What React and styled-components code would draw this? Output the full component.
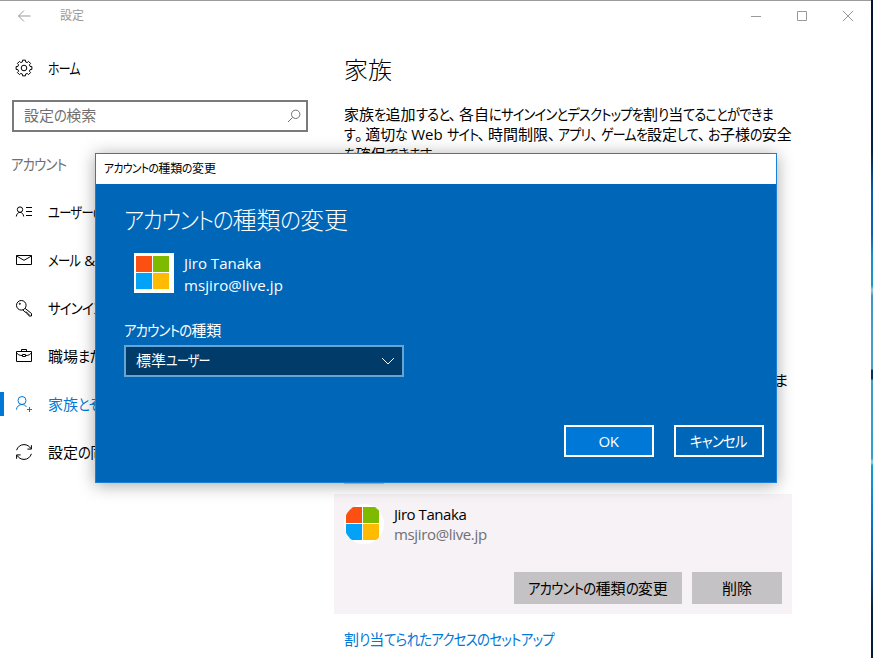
import React from 'react';
import styled, { createGlobalStyle } from 'styled-components';

const GlobalStyle = createGlobalStyle`
	* {
		box-sizing: border-box;
	}

	body {
		margin: 0;
		overflow: hidden;
		background: #fff;
		font-family: "Open Sans", "Noto Sans CJK JP", sans-serif;
		font-size: 15px;
		line-height: 20px;
		color: #000;
		font-feature-settings: "palt";
	}
`;

const Desktop = styled.div`
	position: relative;
	width: 873px;
	height: 658px;
	padding-right: 2px;
	overflow: hidden;
	background: linear-gradient(
		to bottom,
		#04142e 0, #06204a 150px, #0a5cab 190px, #0b61b5 235px, #1690c9 255px,
		#1b95c8 285px, #9fc3cc 290px, #3d96c6 296px, #4ba0ca 369px,
		#06305c 370px, #06305c 379px, #3f9ac8 380px, #2ea0d0 458px,
		#9fd0da 462px, #0d9fd2 466px, #0878cc 520px, #0a4f96 570px, #06213f 610px, #041a33 658px
	);
`;

const Window = styled.div`
	display: flex;
	flex-direction: column;
	height: 100%;
	border-top: 1px solid #9b9b9b;
	background: #fff;
`;

const TitleBar = styled.div`
	display: flex;
	align-items: center;
	flex: none;
	height: 30px;
	padding-left: 16px;
	font-size: 12px;
	color: #999;
`;

const TitleText = styled.span`
	flex: 1;
	margin-left: 28px;
`;

const WindowButton = styled.span`
	display: flex;
	align-items: center;
	justify-content: center;
	width: 46px;
	height: 30px;
`;

const Body = styled.div`
	display: flex;
	flex: 1;
	min-height: 0;
`;

const Sidebar = styled.div`
	display: flex;
	flex-direction: column;
	width: 320px;
`;

const NavItem = styled.div`
	display: flex;
	align-items: center;
	flex: none;
	height: 48px;
	white-space: nowrap;
	color: ${props => (props.$active ? '#0078d7' : '#000')};

	&::before {
		content: '';
		width: 4px;
		height: 24px;
		background: ${props => (props.$active ? '#0078d7' : 'transparent')};
	}

	svg {
		margin: 0 12px 0 8px;
	}
`;

const HomeItem = styled(NavItem)`
	margin-top: 13px;
`;

const SearchBox = styled.div`
	display: flex;
	align-items: center;
	justify-content: space-between;
	flex: none;
	width: 296px;
	height: 32px;
	margin: 8px 0 0 12px;
	padding: 0 5px 2px 10px;
	border: 2px solid #7a7a7a;
	color: #707070;
`;

const NavTitle = styled.div`
	flex: none;
	height: 56px;
	padding: 22px 0 0 11px;
	color: #707070;
`;

const Main = styled.div`
	display: flex;
	flex-direction: column;
	width: 472px;
	padding: 22px 0 0 14px;
`;

const PageTitle = styled.h1`
	margin: 0 0 0 10px;
	font-size: 24px;
	line-height: 34px;
	font-weight: 300;
`;

const Paragraph = styled.p`
	margin: 17px 0 0 10px;
	white-space: nowrap;
`;

const HiddenNote = styled.div`
	margin-top: 206px;
	padding-right: 4px;
	text-align: right;
`;

const AddTile = styled.div`
	width: 40px;
	height: 40px;
	margin: 54px 0 0 10px;
	background: #ccc;
`;

const UserCard = styled.div`
	display: flex;
	flex-direction: column;
	flex: none;
	justify-content: space-between;
	height: 120px;
	margin-top: 10px;
	padding: 10px;
	background: #f6f2f6;
`;

const UserRow = styled.div`
	display: flex;
	gap: 10px;
`;

const Avatar = styled.div`
	display: grid;
	grid-template-columns: 15.5px 15.5px;
	grid-template-rows: 15.5px 15.5px;
	gap: 1.5px;
	width: 40px;
	height: 40px;
	padding: 3px 0 0 2px;
	border-radius: ${props => (props.$round ? '50%' : '0')};
	overflow: hidden;
	background: #fff;
`;

const Tile = styled.span`
	background: ${props => props.$color};
`;

const Latin = styled.div`
	letter-spacing: ${props => props.$spacing}px;
	color: ${props => props.$color || 'inherit'};
`;

const CardButtons = styled.div`
	display: flex;
	justify-content: flex-end;
	gap: 10px;
`;

const GrayButton = styled.div`
	display: flex;
	align-items: center;
	justify-content: center;
	width: ${props => props.$width}px;
	height: 32px;
	background: #c4c2c4;
	white-space: nowrap;
`;

const Link = styled.div`
	margin: 15px 0 0 10px;
	color: #0078d7;
	white-space: nowrap;
`;

const Dialog = styled.div`
	position: absolute;
	left: 95px;
	top: 153px;
	width: 682px;
	height: 330px;
	display: flex;
	flex-direction: column;
	border: 1px solid #1a80d9;
	background: #0067b8;
	color: #fff;
	box-shadow: 0 2px 16px rgba(0, 0, 0, 0.35);
`;

const DialogBar = styled.div`
	height: 30px;
	padding-left: 8px;
	line-height: 30px;
	font-size: 12px;
	background: #fff;
	color: #000;
`;

const DialogBody = styled.div`
	display: flex;
	flex-direction: column;
	flex: 1;
	padding: 19px 12px 25px 28px;
`;

const DialogTitle = styled.h2`
	margin: 0;
	font-size: 24px;
	line-height: 34px;
	font-weight: 300;
`;

const DialogUser = styled(UserRow)`
	height: 40px;
	margin: 16px 0 0 10px;
	line-height: 22px;
`;

const UserLines = styled.div`
	margin-top: -1px;
`;

const Label = styled.div`
	margin-top: 27px;
`;

const Select = styled.div`
	display: flex;
	align-items: center;
	justify-content: space-between;
	width: 280px;
	height: 32px;
	margin-top: 5px;
	padding: 0 7px 2px 10px;
	border: 2px solid #66a4d4;
	background: #003b69;
`;

const DialogButtons = styled.div`
	display: flex;
	justify-content: flex-end;
	gap: 20px;
	margin-top: auto;
`;

const DialogButton = styled.div`
	display: flex;
	align-items: center;
	justify-content: center;
	width: 90px;
	height: 32px;
	padding-right: 1px;
	border: 2px solid #fff;
	background: ${props => (props.$primary ? '#0078d7' : 'transparent')};
	letter-spacing: ${props => (props.$primary ? '-0.4px' : 'normal')};
`;

// narrow kana: the glyphs are squeezed and the freed width is given back
const Kana = styled.span`
	display: inline-block;
	letter-spacing: -0.06em;
	transform: scaleX(${props => props.$scale});
	transform-origin: 0 50%;
	margin-right: ${props => -props.$count * 0.84 * (1 - props.$scale)}em;
`;

const Mark = styled.span`
	margin-right: 0.18em;
`;

const Jp = ({ children, scale = 0.893 }) => (
  <span>
    {children.split(/([\u3040-\u30ff]+|[、。])/).map((part, i) => {
      if (i % 2 === 0) return part;
      if (part === '、' || part === '。') return <Mark key={i}>{part}</Mark>;
      return <Kana key={i} $scale={scale} $count={part.length}>{part}</Kana>;
    })}
  </span>
);

const Icon = ({ size = 24, children }) => (
  <svg width={size} height={size} viewBox={`0 0 ${size} ${size}`} fill="none" stroke="currentColor" strokeWidth="1">
    {children}
  </svg>
);

const gearPath = () => {
  const points = [];
  for (let i = 0; i < 8; i++) {
    const base = (i * Math.PI) / 4;
    [[-0.25, 6.3], [-0.18, 8], [0.18, 8], [0.25, 6.3]].forEach(([a, r]) => {
      points.push(`${(12 + r * Math.sin(base + a)).toFixed(2)} ${(12 - r * Math.cos(base + a)).toFixed(2)}`);
    });
  }
  return `M${points.join('L')}Z`;
};

const icons = {
  home: <><path d={gearPath()} /><circle cx="12" cy="12" r="2.8" /></>,
  user: <><circle cx="8" cy="9.6" r="2.7" /><path d="M4.3 16.5c.3-2.6 1.8-4.1 3.7-4.1s3.4 1.5 3.7 4.1M14 7.5h6M14 11.5h6M14 15.5h6" /></>,
  mail: <><path d="M4.500 7.500h15v9h-15z" /><path d="M4.500 8l7.500 4.300L19.500 8" /></>,
  key: <><circle cx="9.300" cy="9.300" r="4.800" /><circle cx="7.800" cy="7.800" r=".6" /><path d="M13 12.300l6.500 5.200v2.500h-2.600v-1.900h-1.900v-1.900h-2l-2-2.300" /></>,
  work: <><path d="M4.500 7.500h15v10h-15zM9.500 7.500v-2h5v2M4.500 8.500c1 2 3 3 5.500 3M19.500 8.500c-1 2-3 3-5.500 3" /><path d="M10.500 10.500h3v2h-3z" /></>,
  family: <><circle cx="10" cy="8.500" r="4" /><path d="M4.400 17.700c.4-3 2.500-5.200 5.600-5.200 2 0 3.500.9 4.400 2.300M17.500 15v5M15 17.500h5" /></>,
  sync: <><path d="M4.600 10.200C5.600 6.800 8.500 4.600 12 4.600c3 0 5.500 1.600 6.900 4M19.400 5.200v3.900h-4M19.400 13.800c-1 3.400-3.900 5.600-7.400 5.600-3 0-5.500-1.600-6.900-4M4.600 18.800v-3.900h4" /></>,
};

const navItems = [
  { icon: 'user', label: 'ユーザーの', scale: 0.82 },
  { icon: 'mail', label: 'メール &', scale: 0.82 },
  { icon: 'key', label: 'サインイン' },
  { icon: 'work', label: '職場また' },
  { icon: 'family', label: '家族とそ', active: true },
  { icon: 'sync', label: '設定の同' },
];

const tileColors = ['#fb5012', '#7dba00', '#02a3f6', '#ffba02'];

const Logo = ({ round }) => (
  <Avatar $round={round}>
    {tileColors.map(color => <Tile key={color} $color={color} />)}
  </Avatar>
);

const App = () => {
  return (
    <>
      <GlobalStyle />
      <Desktop>
        <Window>
          <TitleBar>
            <Icon size={16}><path d="M14.500 8H2.500M8 2.500L2.500 8 8 13.500" /></Icon>
            <TitleText>設定</TitleText>
            <WindowButton><Icon size={16}><path d="M3 8.500h10" /></Icon></WindowButton>
            <WindowButton><Icon size={16}><path d="M3.500 3.500h9v9h-9z" /></Icon></WindowButton>
            <WindowButton><Icon size={16}><path d="M3 3l10 10M13 3L3 13" /></Icon></WindowButton>
          </TitleBar>
          <Body>
            <Sidebar>
              <HomeItem>
                <Icon>{icons.home}</Icon>
                <Jp scale={0.79}>ホーム</Jp>
              </HomeItem>
              <SearchBox>
                <Jp>設定の検索</Jp>
                <Icon size={14}><circle cx="8.700" cy="6.300" r="4.200" /><path d="M5.600 9.400L1 14" /></Icon>
              </SearchBox>
              <NavTitle><Jp>アカウント</Jp></NavTitle>
              {navItems.map(item => (
                <NavItem key={item.icon} $active={item.active}>
                  <Icon>{icons[item.icon]}</Icon>
                  <Jp scale={item.scale}>{item.label}</Jp>
                </NavItem>
              ))}
            </Sidebar>
            <Main>
              <PageTitle>家族</PageTitle>
              <Paragraph>
                <Jp scale={0.885}>家族を追加すると、各自にサインインとデスクトップを割り当てることができま</Jp><br />
                <Jp scale={0.865}>す。適切な Web サイト、時間制限、アプリ、ゲームを設定して、お子様の安全</Jp><br />
                <Jp>を確保できます。</Jp>
              </Paragraph>
              <HiddenNote>ま</HiddenNote>
              <AddTile />
              <UserCard>
                <UserRow>
                  <Logo round />
                  <div>
                    <Latin $spacing={-0.45}>Jiro Tanaka</Latin>
                    <Latin $spacing={-0.35} $color="#707070">msjiro@live.jp</Latin>
                  </div>
                </UserRow>
                <CardButtons>
                  <GrayButton $width={168}><Jp>アカウントの種類の変更</Jp></GrayButton>
                  <GrayButton $width={90}>削除</GrayButton>
                </CardButtons>
              </UserCard>
              <Link><Jp scale={0.9}>割り当てられたアクセスのセットアップ</Jp></Link>
            </Main>
          </Body>
        </Window>
        <Dialog>
          <DialogBar><Jp scale={0.9}>アカウントの種類の変更</Jp></DialogBar>
          <DialogBody>
            <DialogTitle><Jp scale={0.9}>アカウントの種類の変更</Jp></DialogTitle>
            <DialogUser>
              <Logo />
              <UserLines>
                <Latin $spacing={0}>Jiro Tanaka</Latin>
                <Latin $spacing={0.1}>msjiro@live.jp</Latin>
              </UserLines>
            </DialogUser>
            <Label><Jp>アカウントの種類</Jp></Label>
            <Select>
              <Jp scale={0.8}>標準ユーザー</Jp>
              <Icon size={14}><path d="M1 5l6 6 6-6" /></Icon>
            </Select>
            <DialogButtons>
              <DialogButton $primary>OK</DialogButton>
              <DialogButton><Jp>キャンセル</Jp></DialogButton>
            </DialogButtons>
          </DialogBody>
        </Dialog>
      </Desktop>
    </>
  );
};

export default App;
